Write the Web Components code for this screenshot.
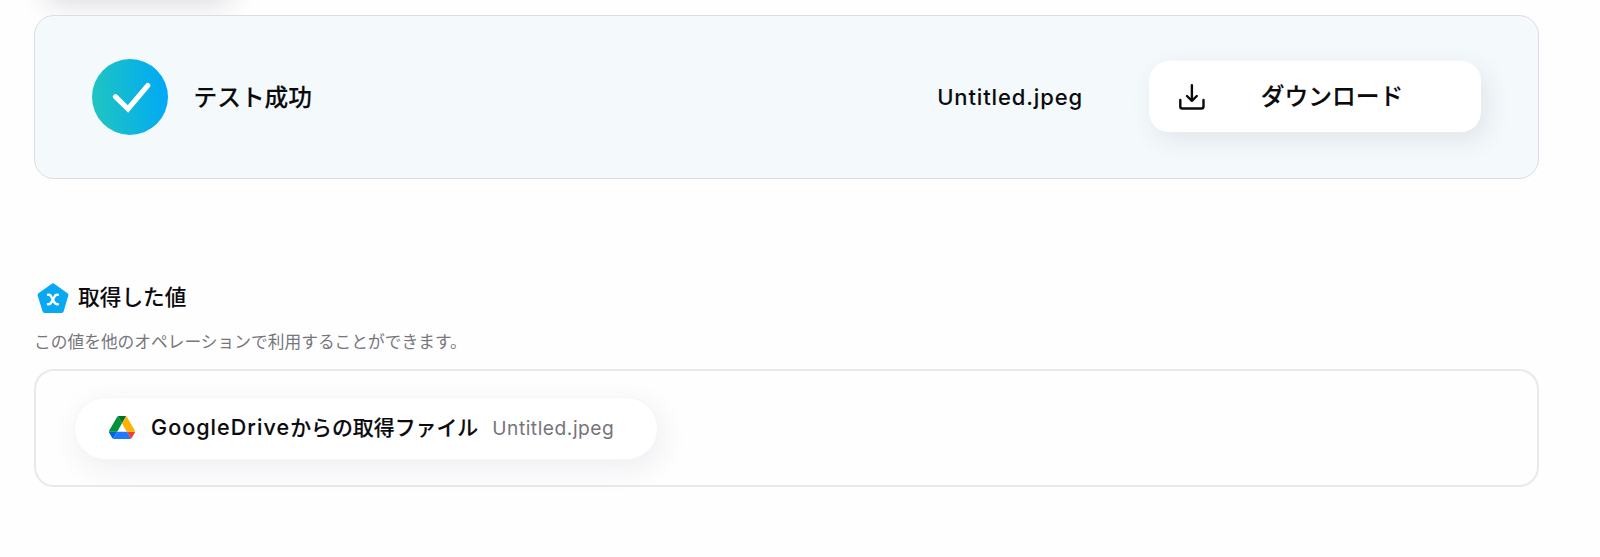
<!DOCTYPE html>
<html lang="ja">
<head>
<meta charset="utf-8">
<title>テスト成功</title>
<style>
html,body{margin:0;height:100%;overflow:hidden;background:#fefefe}
body{font-family:Inter,"Noto Sans CJK JP",sans-serif;color:#0b0b0e;font-weight:500}
</style>
</head>
<body>
<result-page></result-page>
<script>
const define=(name,html)=>customElements.define(name,class extends HTMLElement{
  constructor(){super();this.attachShadow({mode:'open'}).innerHTML=html;}
});
define('success-mark',`<style>:host{display:block;width:76px;height:76px;flex:none}svg{display:block}</style>
<svg width="76" height="76" viewBox="0 0 76 76"><defs><linearGradient id="g" x1="0" y1=".55" x2="1" y2=".45"><stop offset="0" stop-color="#1fc5c0"/><stop offset="1" stop-color="#00a9f6"/></linearGradient></defs><circle cx="38" cy="38" r="38" fill="url(#g)"/><path d="M23.400 37.700 36 50 55.700 26.600" fill="none" stroke="#fff" stroke-width="5.2" stroke-linecap="round"/></svg>`);
define('download-icon',`<style>:host{display:block;width:26px;height:26px;flex:none}svg{display:block}</style>
<svg width="26" height="26" viewBox="0 0 26 26" fill="none" stroke="#0b0b0e" stroke-width="2.4" stroke-linecap="round" stroke-linejoin="round"><path d="M1.300 16v6.500a2 2 0 0 0 2 2h19.200a2 2 0 0 0 2-2v-6.500M12.900 1.200v15.600M8 12l4.900 4.800 4.900-4.800"/></svg>`);
define('value-icon',`<style>:host{display:block;width:32px;height:31px;flex:none}svg{display:block}</style>
<svg width="32" height="31" viewBox="0 0 32 31"><path d="M16 2.400 29.400 12 24.700 28h-17.200L2.600 12Z" fill="#08a9f2" stroke="#08a9f2" stroke-width="4" stroke-linejoin="round"/><path d="M11 11.700h.6c1.400 0 2 .6 2.600 1.800l3.200 5.900c.6 1.200 1.200 1.800 2.600 1.800h.8M20.800 11.700h-.6c-1.400 0-2 .6-2.600 1.800l-3.200 5.900c-.6 1.200-1.200 1.800-2.600 1.800h-.8" fill="none" stroke="#fff" stroke-width="2.500" stroke-linecap="round"/></svg>`);
define('drive-icon',`<style>:host{display:block;width:26px;height:23px;flex:none;margin-bottom:2px}svg{display:block}</style>
<svg width="26" height="23" viewBox="0 0 87.3 78" preserveAspectRatio="none"><path d="m6.600 66.850 3.850 6.650c.8 1.400 1.950 2.500 3.300 3.300L27.500 53H0c0 1.550.4 3.100 1.200 4.500z" fill="#0066da"/><path d="M43.650 25 29.900 1.200c-1.350.8-2.500 1.900-3.300 3.300L1.200 48.500C.4 49.900 0 51.450 0 53h27.500z" fill="#00913d"/><path d="M73.550 76.800c1.350-.8 2.500-1.900 3.300-3.300l9.250-16c.8-1.400 1.200-2.950 1.200-4.500H59.800l5.850 11.500z" fill="#ea4335"/><path d="M43.650 25 57.400 1.200C56.050.4 54.500 0 52.900 0H34.400c-1.600 0-3.150.45-4.500 1.200z" fill="#00702b"/><path d="M59.800 53H27.500L13.750 76.800c1.350.8 2.900 1.200 4.500 1.200h50.800c1.600 0 3.150-.45 4.500-1.200z" fill="#1f78ff"/><path d="M73.400 26.500 60.700 4.500c-.8-1.400-1.950-2.500-3.300-3.300L43.650 25 59.800 53h27.450c0-1.550-.4-3.100-1.200-4.500z" fill="#ffb000"/></svg>`);
define('download-button',`<style>:host{display:block}
button{display:flex;align-items:center;box-sizing:border-box;width:332px;height:71px;margin:0;padding:0 30px;border:0;border-radius:20px;background:#fff;color:inherit;font:inherit;-webkit-text-stroke:.15px currentColor;font-size:23.750px;box-shadow:6px 8px 24px rgba(60,60,80,.1)}
span{flex:1;text-align:center;padding:0 0 4px 8px}</style>
<button><download-icon></download-icon><span><slot></slot></span></button>`);
define('result-banner',`<style>:host{box-sizing:border-box;display:flex;align-items:center;height:164px;padding:0 57px 0 56.500px;border:1px solid #dcdde3;border-radius:20px;background:#f4f9fc}
.t{font-size:23.700px;margin-left:26px;padding-bottom:3px;-webkit-text-stroke:.12px currentColor}
.f{margin:0 66px 1px auto;font-size:22px;letter-spacing:.87px}
.d{padding-bottom:1px}</style>
<success-mark></success-mark><div class="t"><slot></slot></div><div class="f"><slot name="file"></slot></div><div class="d"><slot name="action"></slot></div>`);
define('value-heading',`<style>:host{display:flex;align-items:center;height:32px;gap:9px;padding-left:3px;font-size:21.700px}span{padding-bottom:5px}value-icon{margin-top:1px}</style><value-icon></value-icon><span><slot></slot></span>`);
define('value-chip',`<style>:host{box-sizing:border-box;display:flex;align-items:center;width:584px;height:63px;padding:0 34px;border:1px solid #f6f5f8;border-radius:32px;background:#fff;box-shadow:4px 8px 28px rgba(80,50,100,.09);white-space:nowrap}
b{font-weight:500;font-size:20.900px;margin-left:16px;padding-bottom:4px;-webkit-text-stroke:.12px currentColor}
b slot[name=service]{font-size:21.500px;letter-spacing:1.060px}
i{font-style:normal;font-weight:400;font-size:19.200px;letter-spacing:.53px;color:#76747b;margin-left:14px}</style>
<drive-icon></drive-icon><b><slot name="service"></slot><slot></slot></b><i><slot name="file"></slot></i>`);
define('value-box',`<style>:host{box-sizing:border-box;display:flex;align-items:center;height:118px;padding:0 38px;border:2px solid #e9e8eb;border-radius:20px}</style><slot></slot>`);
define('previous-action',`<style>:host{display:block;width:188px;height:60px;border-radius:16px;background:#fff;box-shadow:4px 8px 26px rgba(60,45,85,.17)}</style>`);
define('result-page',`<style>:host{display:block;box-sizing:border-box;padding:0 61px 0 34px}
previous-action{margin:-63px 0 18px 6px}
value-heading{margin-top:103px}
p{margin:14px 0 0;height:26px;line-height:26px;font-size:16.730px;font-weight:400;color:#78767d;font-family:"Noto Sans CJK JP",sans-serif}
value-box{margin-top:15px}</style>
<previous-action></previous-action>
<result-banner>テスト成功<span slot="file">Untitled.jpeg</span><download-button slot="action">ダウンロード</download-button></result-banner>
<value-heading>取得した値</value-heading>
<p>この値を他のオペレーションで利用することができます。</p>
<value-box><value-chip><span slot="service">GoogleDrive</span>からの取得ファイル<span slot="file">Untitled.jpeg</span></value-chip></value-box>`);
</script>
</body>
</html>
